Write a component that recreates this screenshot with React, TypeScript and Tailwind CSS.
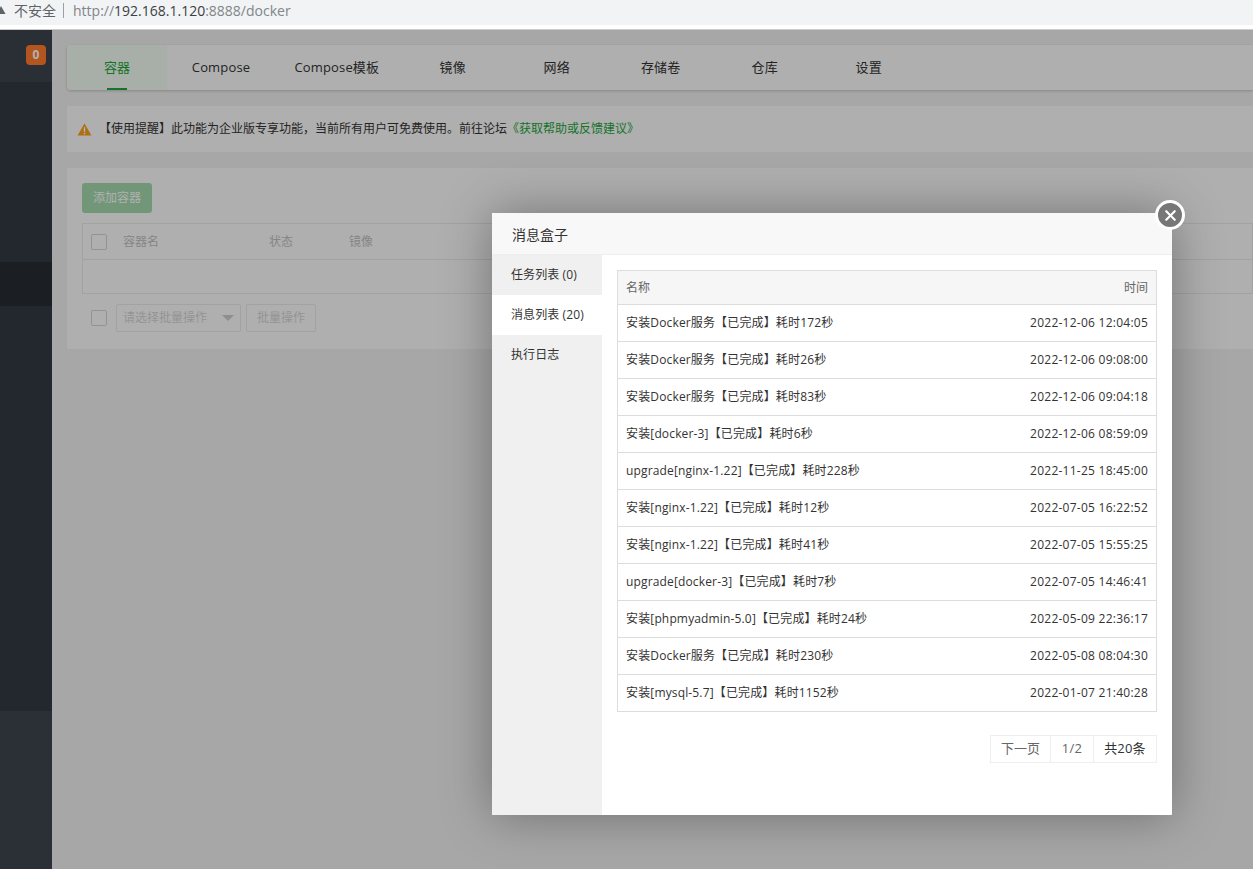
import { X } from "lucide-react";

const tabs = ["Compose", "Compose模板", "镜像", "网络", "存储卷", "仓库", "设置"];

const messages = [
  ["安装Docker服务【已完成】耗时172秒", "2022-12-06 12:04:05"],
  ["安装Docker服务【已完成】耗时26秒", "2022-12-06 09:08:00"],
  ["安装Docker服务【已完成】耗时83秒", "2022-12-06 09:04:18"],
  ["安装[docker-3]【已完成】耗时6秒", "2022-12-06 08:59:09"],
  ["upgrade[nginx-1.22]【已完成】耗时228秒", "2022-11-25 18:45:00"],
  ["安装[nginx-1.22]【已完成】耗时12秒", "2022-07-05 16:22:52"],
  ["安装[nginx-1.22]【已完成】耗时41秒", "2022-07-05 15:55:25"],
  ["upgrade[docker-3]【已完成】耗时7秒", "2022-07-05 14:46:41"],
  ["安装[phpmyadmin-5.0]【已完成】耗时24秒", "2022-05-09 22:36:17"],
  ["安装Docker服务【已完成】耗时230秒", "2022-05-08 08:04:30"],
  ["安装[mysql-5.7]【已完成】耗时1152秒", "2022-01-07 21:40:28"],
];

function Sidebar() {
  return (
    <aside className="w-[52px] shrink-0 flex flex-col bg-[#3c444d]">
      <div className="h-[52px] bg-[#3c444d] flex justify-end pr-[6px] pt-[15px]">
        <span className="w-5 h-5 rounded-[4px] bg-[#ff7a2b] text-white text-[12px] font-bold flex items-center justify-center">0</span>
      </div>
      <div className="h-[180px] bg-[#333a43]" />
      <div className="h-[44px] bg-[#282d33]" />
      <div className="h-[405px] bg-[#333a43]" />
      <div className="flex-1 bg-[#3e454e]" />
    </aside>
  );
}

function Background() {
  return (
    <main className="flex-1 min-w-0 bg-[#f0f0f0] pl-[15px] pt-[15px] flex flex-col">
      <div className="h-[45px] bg-[#fbfbfb] rounded-l-[4px] flex shadow-[0_1px_3px_rgba(0,0,0,0.2)] text-[13px] text-[#333] gap-[4px]">
        <div className="relative w-[100px] bg-[#f1fbf3] flex items-center justify-center text-[#20a53a] rounded-l-[4px]">
          容器
          <span className="absolute bottom-0 left-[40px] w-5 h-[2px] bg-[#20a53a]" />
        </div>
        {tabs.map((t) => (
          <div key={t} className="min-w-[100px] px-[19.5px] pt-px flex items-center justify-center tracking-[0.15px]">{t}</div>
        ))}
      </div>

      <div className="mt-[16px] h-[46px] bg-[#fbfbfb] flex items-center pl-[10px] text-[12px] text-[#333]">
        <svg viewBox="0 0 16 14" className="w-[15px] h-[13px] mr-[7px]">
          <path d="M8 0.5 L15.5 13.5 L0.5 13.5 Z" fill="#fba017" />
          <rect x="7.2" y="4.5" width="1.6" height="5" fill="#fff" />
          <rect x="7.2" y="10.5" width="1.6" height="1.6" fill="#fff" />
        </svg>
        【使用提醒】此功能为企业版专享功能，当前所有用户可免费使用。前往论坛
        <span className="text-[#20a53a]">《获取帮助或反馈建议》</span>
      </div>

      <div className="mt-[16px] h-[181px] bg-[#fbfbfb] rounded-l-[2px] pl-[15px] pt-[15px]">
        <div className="opacity-40">
          <button className="block w-[70px] h-[30px] bg-[#20a53a] text-white text-[12px] rounded-[3px]">添加容器</button>
          <div className="mt-[10px] border border-[#ccc] text-[12px] text-[#666]">
            <div className="h-[36px] flex items-center border-b border-[#ccc]">
              <span className="ml-[8px] w-4 h-4 border border-[#999] rounded-[2px]" />
              <span className="ml-[16px] w-[146px]">容器名</span>
              <span className="w-[80px]">状态</span>
              <span>镜像</span>
            </div>
            <div className="h-[33px]" />
          </div>
          <div className="mt-[10px] flex items-center h-[28px] text-[12px] text-[#999]">
            <span className="ml-[9px] w-4 h-4 border border-[#999] rounded-[2px]" />
            <div className="ml-[9px] w-[125px] h-[28px] border border-[#ccc] rounded-[2px] flex items-center justify-between pl-[6px] pr-[6px] pb-px">
              请选择批量操作
              <span className="border-x-[6px] border-t-[6px] border-x-transparent border-t-[#888]" />
            </div>
            <div className="ml-[5px] w-[70px] h-[28px] border border-[#ccc] rounded-[2px] flex items-center justify-center">批量操作</div>
          </div>
        </div>
      </div>
    </main>
  );
}

function Modal() {
  return (
    <div className="absolute left-[492px] top-[183px] w-[680px] h-[602px] bg-white rounded-[1px] shadow-[0_0_50px_rgba(0,0,0,0.35)] flex flex-col">
      <button className="absolute -right-[13px] -top-[13px] w-[30px] h-[30px] rounded-full bg-[#777] border-[3px] border-white flex items-center justify-center text-white">
        <X size={17} strokeWidth={3} />
      </button>
      <div className="h-[42px] shrink-0 bg-[#f8f8f8] border-b border-[#eee] pl-[20px] pt-[2px] flex items-center text-[14px] text-[#333]">消息盒子</div>
      <div className="flex flex-1 min-h-0">
        <nav className="w-[110px] shrink-0 bg-[#f0f0f0] text-[12px] text-[#333] tracking-[0.1px]">
          <div className="h-[40px] pl-[19px] flex items-center">任务列表 (0)</div>
          <div className="h-[40px] pl-[19px] flex items-center bg-white">消息列表 (20)</div>
          <div className="h-[40px] pl-[19px] flex items-center">执行日志</div>
        </nav>
        <section className="flex-1 pl-[15px] pr-[15px] pt-[15px]">
          <div className="border border-[#ddd] text-[12px] text-[#333]">
            <div className="h-[33px] bg-[#f6f6f6] flex items-center justify-between px-[8px] text-[#666]">
              <span>名称</span>
              <span>时间</span>
            </div>
            {messages.map(([name, time]) => (
              <div key={time} className="h-[37px] border-t border-[#ddd] flex items-center justify-between px-[8px]">
                <span className="tracking-[0.15px]">{name}</span>
                <span className="tracking-[0.25px]">{time}</span>
              </div>
            ))}
          </div>
          <div className="mt-[23px] flex justify-end text-[13px] text-[#666]">
            <div className="flex h-[28px] border border-[#eee]">
              <span className="w-[60px] flex items-center justify-center border-r border-[#eee]">下一页</span>
              <span className="w-[43px] flex items-center justify-center border-r border-[#eee] tracking-[0.3px]">1/2</span>
              <span className="w-[62px] flex items-center justify-center text-[#333] tracking-[0.2px]">共20条</span>
            </div>
          </div>
        </section>
      </div>
    </div>
  );
}

export default function App() {
  return (
    <div className="h-[869px] overflow-hidden flex flex-col bg-white" style={{ fontFamily: '"Open Sans", "Noto Sans CJK SC", sans-serif' }}>
      <header className="h-[25px] pb-[5px] bg-[#f1f3f4] flex items-center text-[14px] text-[#5f6368]">
        <svg viewBox="0 0 10 10" className="w-[10px] h-[10px] -ml-[4px] mr-[8px]">
          <path d="M5 1 L9.5 9 L0.5 9 Z" fill="#5f6368" />
        </svg>
        <span>不安全</span>
        <span className="ml-[7px] mr-[9px] w-px h-[15px] bg-[#9aa0a6]" />
        <span className="text-[#80868b]">http://<span className="text-[#3c4043]">192.168.1.120</span>:8888/docker</span>
      </header>
      <div className="h-[5px] bg-white border-b border-[#ccc]" />
      <div className="relative flex-1 flex min-h-0">
        <Sidebar />
        <Background />
        <div className="absolute inset-0 bg-black/30" />
        <Modal />
      </div>
    </div>
  );
}
